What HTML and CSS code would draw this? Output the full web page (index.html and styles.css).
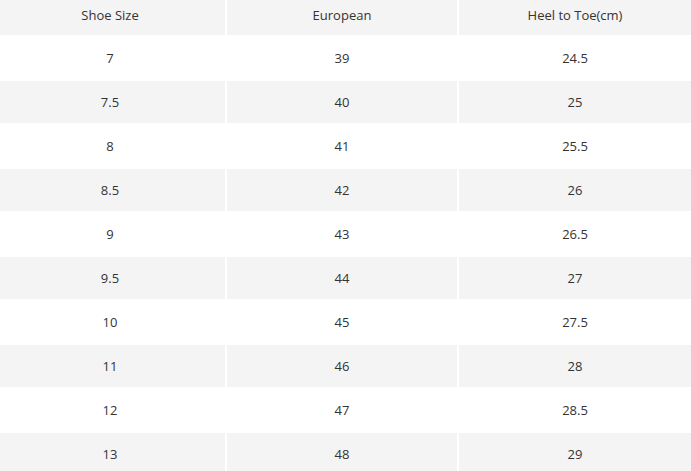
FILE: index.html
```html
<!DOCTYPE html>
<html>
<head>
<meta charset="utf-8">
<link rel="stylesheet" href="styles.css">
</head>
<body>
<table class="size-table">
  <colgroup>
    <col class="col-a"><col class="col-b"><col class="col-c">
  </colgroup>
  <thead>
    <tr><th>Shoe Size</th><th>European</th><th>Heel to Toe(cm)</th></tr>
  </thead>
  <tbody>
    <tr><td>7</td><td>39</td><td>24.5</td></tr>
    <tr><td>7.5</td><td>40</td><td>25</td></tr>
    <tr><td>8</td><td>41</td><td>25.5</td></tr>
    <tr><td>8.5</td><td>42</td><td>26</td></tr>
    <tr><td>9</td><td>43</td><td>26.5</td></tr>
    <tr><td>9.5</td><td>44</td><td>27</td></tr>
    <tr><td>10</td><td>45</td><td>27.5</td></tr>
    <tr><td>11</td><td>46</td><td>28</td></tr>
    <tr><td>12</td><td>47</td><td>28.5</td></tr>
    <tr><td>13</td><td>48</td><td>29</td></tr>
  </tbody>
</table>
</body>
</html>
```
FILE: styles.css
```css
html, body {
  margin: 0;
  padding: 0;
  background: #fff;
  overflow: hidden;
}
.size-table {
  margin: -7px 0 0 -7px;
  border-collapse: separate;
  border-spacing: 2px;
  table-layout: fixed;
  width: 700px;
  font-family: "Open Sans", sans-serif;
  font-size: 13px;
  color: #333;
}
.col-a { width: 230px; }
.col-b { width: 230px; }
.col-c { width: 232px; }
.size-table th,
.size-table td {
  padding: 0;
  text-align: center;
  font-weight: normal;
}
.size-table th {
  height: 40px;
  background: #f4f4f4;
}
.size-table td {
  height: 42px;
}
.size-table tbody tr:nth-child(even) td {
  background: #f4f4f4;
}
```
